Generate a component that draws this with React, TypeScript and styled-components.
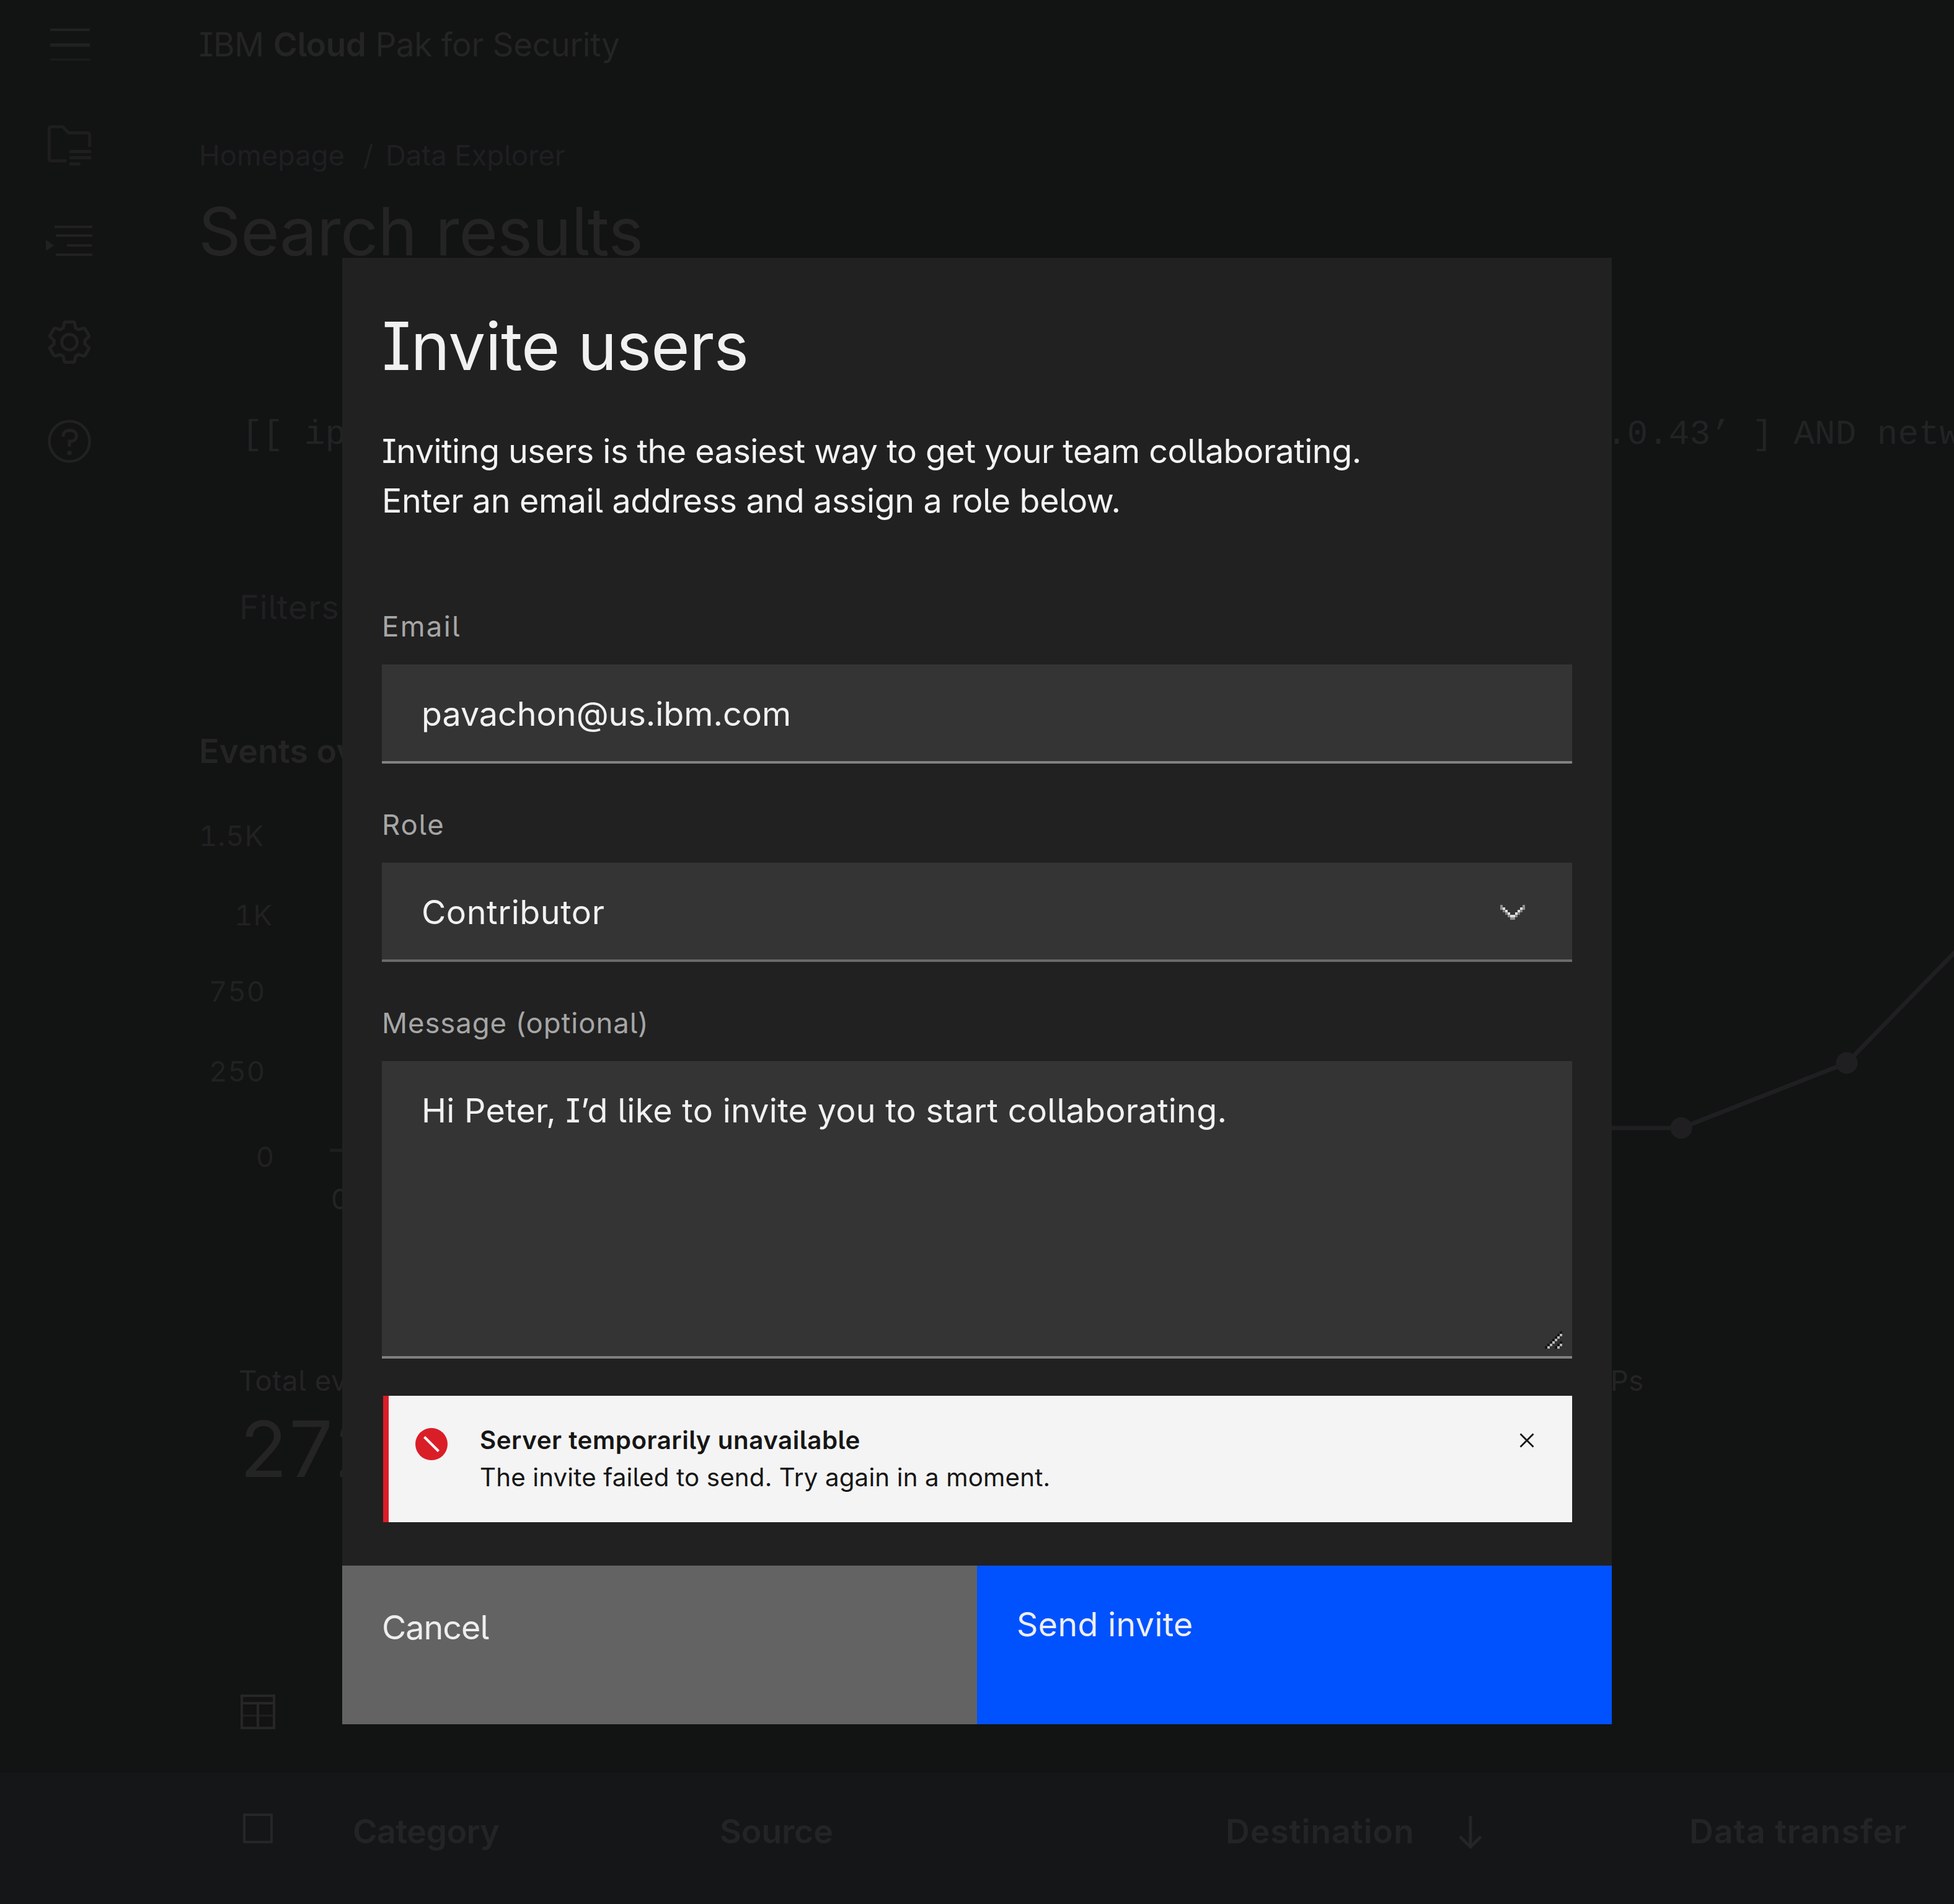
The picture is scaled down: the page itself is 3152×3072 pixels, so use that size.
import React from "react";
import styled, { createGlobalStyle } from "styled-components";

const sans = `Inter, "Noto Sans", "Liberation Sans", sans-serif`;
const mono = `"Liberation Mono", monospace`;

const GlobalStyle = createGlobalStyle`
  html, body { margin: 0; padding: 0; background: #121313; }
  *, *::before, *::after { box-sizing: border-box; }
  body { font-family: ${sans}; font-feature-settings: "cv05", "cv08"; font-kerning: normal; }
  h1, h2, p { margin: 0; font-weight: 400; }
  button { border: 0; font: inherit; font-feature-settings: inherit; text-align: left; }
`;

/* ---------- page behind the dialog ---------- */

const Page = styled.div`
  position: relative;
  display: flex;
  flex-direction: column;
  width: 3152px;
  height: 3072px;
  overflow: hidden;
  background: #121313;
  color: #242425;
  white-space: nowrap;
`;

const Upper = styled.div`
  display: flex;
  height: 2860px;
`;

const Rail = styled.nav`
  flex: none;
  display: flex;
  flex-direction: column;
  align-items: center;
  gap: 80px;
  width: 224px;
  padding-top: 32px;
  color: #212122;
`;

const RailIcon = styled.svg<{ $dim?: boolean }>`
  display: block;
  width: 80px;
  height: 80px;
  fill: currentColor;
  opacity: ${(p) => (p.$dim ? 0.8 : 1)};
`;

const Main = styled.main`
  flex: 1;
  min-width: 0;
  display: flex;
  flex-direction: column;
`;

const Brand = styled.div`
  display: flex;
  gap: 15px;
  padding-left: 97px;
  font-size: 53px;
  line-height: 145px;
  height: 144px;
  letter-spacing: -0.4px;
`;

const BrandStrong = styled.strong`
  font-weight: 600;
`;

const Breadcrumb = styled.div`
  display: flex;
  margin-top: 75px;
  padding-left: 97px;
  font-size: 45.5px;
  line-height: 64px;
  letter-spacing: -0.1px;
  color: #1f1f22;
`;

const Slash = styled.span`
  width: 66px;
  text-align: center;
  padding-left: 10px;
`;

const PageTitle = styled.h1`
  margin-top: 26px;
  padding-left: 96px;
  font-size: 107px;
  line-height: 128px;
  letter-spacing: -0.4px;
`;

const Query = styled.div`
  display: flex;
  align-items: center;
  justify-content: space-between;
  height: 294px;
  margin-top: 117px;
  padding-left: 166px;
  background: #121414;
  color: #222324;
  font-family: ${mono};
  font-size: 56px;
`;

const QueryTail = styled.span`
  width: 561px;
`;

const Filters = styled.div`
  margin-top: 92px;
  padding-left: 162px;
  font-size: 53.8px;
  line-height: 80px;
  letter-spacing: 0.9px;
  color: #202023;
`;

const ChartTitle = styled.h2`
  margin-top: 152px;
  padding-left: 97px;
  font-size: 53.8px;
  font-weight: 600;
  line-height: 80px;
`;

const Chart = styled.div`
  display: flex;
  height: 944px;
`;

const Axis = styled.div`
  flex: none;
  display: flex;
  flex-direction: column;
  align-items: flex-end;
  width: 308px;
  padding-top: 65px;
  font-size: 45.5px;
  line-height: 64px;
  letter-spacing: 0.8px;
  font-variant-numeric: tabular-nums;
  color: #212122;
`;

const AxisLabel = styled.span<{ $inset: number; $gap: number }>`
  margin-top: ${(p) => p.$gap}px;
  margin-right: ${(p) => p.$inset}px;
`;

const Plot = styled.div`
  flex: 1;
  display: flex;
  flex-direction: column;
`;

const PlotLines = styled.svg`
  display: block;
  width: 2620px;
  height: 648px;
`;

const XLabel = styled.span`
  margin-top: 3px;
  padding-left: 2px;
  font-size: 45.5px;
  line-height: 64px;
`;

const Stats = styled.div`
  display: grid;
  grid-template-columns: 2192px 1fr;
  padding-left: 161px;
`;

const Stat = styled.div`
  display: flex;
  flex-direction: column;
  gap: 14px;
`;

const StatLabel = styled.span`
  font-size: 45.5px;
  line-height: 64px;
  letter-spacing: 0.6px;
`;

const StatValue = styled.span`
  font-size: 125px;
  line-height: 128px;
  letter-spacing: -5px;
  font-variant-numeric: tabular-nums;
`;

const TableIcon = styled.svg`
  display: block;
  width: 56px;
  height: 56px;
  margin: 332px 0 0 164px;
`;

const TableHead = styled.div`
  flex: 1;
  display: grid;
  grid-template-columns: 177px 592px 816px 375px 373px 1fr;
  align-items: start;
  padding: 55px 0 0 392px;
  background: #151617;
  font-size: 53.8px;
  font-weight: 600;
  line-height: 80px;
  color: #232425;
`;

const Checkbox = styled.span`
  width: 48px;
  height: 48px;
  margin-top: 11px;
  border: 4px solid #252627;
`;

const Heading = styled.span<{ $track: number }>`
  letter-spacing: ${(p) => p.$track}px;
`;

const SortIcon = styled.svg`
  width: 40px;
  height: 54px;
  margin-top: 15px;
`;

/* ---------- dialog ---------- */

const Dialog = styled.section`
  position: absolute;
  top: 416px;
  left: 552px;
  display: flex;
  flex-direction: column;
  width: 2048px;
  height: 2366px;
  background: #212121;
  color: #f1f1f1;
`;

const DialogBody = styled.div`
  flex: 1;
  display: flex;
  flex-direction: column;
  padding: 78px 64px 0;
`;

const DialogTitle = styled.h2`
  font-size: 107px;
  line-height: 128px;
  letter-spacing: -0.75px;
`;

const Lead = styled.p`
  margin-top: 66.4px;
  margin-bottom: 63.6px;
  font-size: 53.8px;
  line-height: 80px;
  color: #f3f3f3;
`;

const LeadLine = styled.span<{ $track: number }>`
  display: block;
  letter-spacing: ${(p) => p.$track}px;
`;

const Field = styled.div`
  display: flex;
  flex-direction: column;
  gap: 36.6px;
  padding-top: 75.4px;
`;

const Label = styled.label<{ $track: number }>`
  font-size: 45.5px;
  line-height: 48px;
  letter-spacing: ${(p) => p.$track}px;
  color: #a6a6a6;
`;

const Control = styled.div<{ $tall?: boolean; $line: string; $track: number }>`
  display: flex;
  justify-content: space-between;
  height: ${(p) => (p.$tall ? 480 : 160)}px;
  padding: 40px ${(p) => (p.$tall ? 16 : 76)}px 0 64px;
  border-bottom: 4px solid ${(p) => p.$line};
  background: #343434;
  font-size: 53.8px;
  line-height: 80px;
  letter-spacing: ${(p) => p.$track}px;
`;

const Chevron = styled.svg`
  width: 40px;
  height: 24px;
  margin-top: 28px;
  shape-rendering: crispEdges;
`;

const Grip = styled.svg`
  align-self: flex-end;
  width: 28px;
  height: 28px;
  margin-bottom: 12px;
  shape-rendering: crispEdges;
`;

const Notice = styled.div`
  display: flex;
  height: 204px;
  margin: 60px 0 0 2px;
  padding: 42px 61px 0 43px;
  border-left: 9px solid #da1e28;
  background: #f4f4f4;
  color: #161616;
  font-size: 40.3px;
  line-height: 60px;
`;

const ErrorIcon = styled.svg`
  flex: none;
  width: 52px;
  height: 52px;
  margin-top: 10px;
`;

const NoticeText = styled.div`
  flex: 1;
  display: flex;
  flex-direction: column;
  padding-left: 52px;
  letter-spacing: 0.15px;
`;

const NoticeTitle = styled.strong`
  font-weight: 600;
  letter-spacing: 0.53px;
`;

const CloseIcon = styled.svg`
  width: 24px;
  height: 24px;
  margin-top: 18px;
`;

const Footer = styled.footer`
  display: grid;
  grid-template-columns: 1fr 1fr;
  height: 256px;
`;

const Action = styled.button<{ $primary?: boolean }>`
  display: flex;
  align-items: flex-start;
  padding: ${(p) => (p.$primary ? 55 : 60)}px 64px 0;
  background: ${(p) => (p.$primary ? "#0052ff" : "#636363")};
  color: #eeeeee;
  font-size: 53.8px;
  line-height: 80px;
  letter-spacing: ${(p) => (p.$primary ? 0.3 : -1)}px;
`;

const yAxis = [
  { text: "1.5K", inset: 106, gap: 0 },
  { text: "1K", inset: 92, gap: 64 },
  { text: "750", inset: 104, gap: 59 },
  { text: "250", inset: 104, gap: 65 },
  { text: "0", inset: 89, gap: 74 },
];

const chevronDots = [
  [0, 0, "#8f8f8f"], [0, 4, "#8f8f8f"], [4, 4, "#dedede"], [4, 8, "#7e7e7e"],
  [8, 8, "#dedede"], [8, 12, "#7e7e7e"], [12, 12, "#dedede"], [12, 16, "#8a8a8a"],
  [16, 16, "#dedede"], [16, 20, "#8f8f8f"], [20, 16, "#dedede"], [20, 20, "#8f8f8f"],
  [24, 12, "#dedede"], [24, 16, "#8a8a8a"], [28, 8, "#dedede"], [28, 12, "#7e7e7e"],
  [32, 4, "#dedede"], [32, 8, "#7e7e7e"], [36, 0, "#8f8f8f"], [36, 4, "#8f8f8f"],
] as const;

const gripDots = [
  ...[0, 1, 2, 3, 4, 5, 6].map((i) => [i * 4, 24 - i * 4, "#161616"] as const),
  ...[1, 2, 3, 4, 5, 6].map((i) => [i * 4, 28 - i * 4, "#b5b5b5"] as const),
  ...[4, 5, 6].map((i) => [i * 4, 40 - i * 4, "#161616"] as const),
  ...[5, 6].map((i) => [i * 4, 44 - i * 4, "#b5b5b5"] as const),
];

function RailIcons() {
  return (
    <Rail>
      <RailIcon viewBox="0 0 80 80">
        <rect x="9" y="14" width="64" height="4" />
        <rect x="9" y="38" width="64" height="5.5" />
        <rect x="9" y="62" width="64" height="4" opacity="0.5" />
      </RailIcon>
      <RailIcon $dim viewBox="0 0 32 32">
        <rect x="16" y="20" width="14" height="2" />
        <rect x="16" y="24" width="14" height="2" />
        <rect x="16" y="28" width="7" height="2" />
        <path d="M14,26H4V6h7.17l3.41,3.41.59.59H28v8h2V10a2,2,0,0,0-2-2H16L12.59,4.59A2,2,0,0,0,11.17,4H4A2,2,0,0,0,2,6V26a2,2,0,0,0,2,2H14Z" />
      </RailIcon>
      <RailIcon viewBox="0 0 80 80">
        <rect x="16" y="12" width="61" height="4" />
        <rect x="18" y="26" width="59" height="4" />
        <rect x="36" y="42" width="40" height="4" />
        <rect x="18" y="57" width="59" height="4" />
        <path d="M2 35L15 44L2 53Z" />
      </RailIcon>
      <RailIcon viewBox="0 0 32 32">
        <path d="M27,16.76c0-.25,0-.5,0-.76s0-.51,0-.77l1.92-1.68A2,2,0,0,0,29.3,11L26.94,7a2,2,0,0,0-1.73-1,2,2,0,0,0-.64.1l-2.43.82a11.35,11.35,0,0,0-1.31-.75l-.51-2.52a2,2,0,0,0-2-1.61H13.64a2,2,0,0,0-2,1.61l-.51,2.52a11.48,11.48,0,0,0-1.32.75L7.43,6.06A2,2,0,0,0,6.79,6,2,2,0,0,0,5.06,7L2.7,11a2,2,0,0,0,.41,2.51L5,15.24c0,.25,0,.5,0,.76s0,.51,0,.77L3.11,18.45A2,2,0,0,0,2.7,21L5.06,25a2,2,0,0,0,1.73,1,2,2,0,0,0,.64-.1l2.43-.82a11.35,11.35,0,0,0,1.31.75l.51,2.52a2,2,0,0,0,2,1.61h4.72a2,2,0,0,0,2-1.61l.51-2.52a11.48,11.48,0,0,0,1.32-.75l2.42.82a2,2,0,0,0,.64.1,2,2,0,0,0,1.73-1L29.3,21a2,2,0,0,0-.41-2.51ZM25.21,24l-3.43-1.16a8.86,8.86,0,0,1-2.71,1.57L18.36,28H13.64l-.71-3.55a9.36,9.36,0,0,1-2.7-1.57L6.79,24,4.43,20l2.72-2.4a8.9,8.9,0,0,1,0-3.13L4.43,12,6.79,8l3.43,1.16a8.86,8.86,0,0,1,2.71-1.57L13.64,4h4.72l.71,3.55a9.36,9.36,0,0,1,2.7,1.57L25.21,8,27.57,12l-2.72,2.4a8.9,8.9,0,0,1,0,3.13L27.57,20Z" />
        <path d="M16,22a6,6,0,1,1,6-6A5.94,5.94,0,0,1,16,22Zm0-10a3.91,3.91,0,0,0-4,4,3.91,3.91,0,0,0,4,4,3.91,3.91,0,0,0,4-4A3.91,3.91,0,0,0,16,12Z" />
      </RailIcon>
      <RailIcon viewBox="0 0 32 32">
        <circle cx="16" cy="16" r="13" fill="none" stroke="currentColor" strokeWidth="1.8" />
        <circle cx="16" cy="23.5" r="1.5" />
        <path d="M17,8H15.5A4.49,4.49,0,0,0,11,12.5V13h2v-.5A2.5,2.5,0,0,1,15.5,10H17a2.5,2.5,0,0,1,0,5H15v4.5h2V17a4.5,4.5,0,0,0,0-9Z" />
      </RailIcon>
    </Rail>
  );
}

function InviteDialog() {
  return (
    <Dialog>
      <DialogBody>
        <DialogTitle>Invite users</DialogTitle>
        <Lead>
          <LeadLine $track={-0.5}>Inviting users is the easiest way to get your team collaborating.</LeadLine>
          <LeadLine $track={-0.35}>Enter an email address and assign a role below.</LeadLine>
        </Lead>
        <Field>
          <Label $track={2.3}>Email</Label>
          <Control $line="#828282" $track={0}>pavachon@us.ibm.com</Control>
        </Field>
        <Field>
          <Label $track={1.8}>Role</Label>
          <Control $line="#6b6b6b" $track={0.55}>
            Contributor
            <Chevron viewBox="0 0 40 24">
              {chevronDots.map(([x, y, c]) => (
                <rect key={`${x}-${y}`} x={x} y={y} width="4" height="4" fill={c} />
              ))}
            </Chevron>
          </Control>
        </Field>
        <Field>
          <Label $track={0.9}>Message (optional)</Label>
          <Control $tall $line="#808080" $track={0.3}>
            Hi Peter, I’d like to invite you to start collaborating.
            <Grip viewBox="0 0 28 28">
              {gripDots.map(([x, y, c]) => (
                <rect key={`${x}-${y}`} x={x} y={y} width="4" height="4" fill={c} />
              ))}
            </Grip>
          </Control>
        </Field>
        <Notice>
          <ErrorIcon viewBox="0 0 52 52">
            <circle cx="26" cy="26" r="26" fill="#da1e28" />
            <path d="M14.5 14.5L37.5 37.5" stroke="#fff" strokeWidth="4" />
          </ErrorIcon>
          <NoticeText>
            <NoticeTitle>Server temporarily unavailable</NoticeTitle>
            <span>The invite failed to send. Try again in a moment.</span>
          </NoticeText>
          <CloseIcon viewBox="0 0 24 24">
            <path d="M1.5 1.5L22.5 22.5M22.5 1.5L1.5 22.5" stroke="#161616" strokeWidth="2.8" />
          </CloseIcon>
        </Notice>
      </DialogBody>
      <Footer>
        <Action>Cancel</Action>
        <Action $primary>Send invite</Action>
      </Footer>
    </Dialog>
  );
}

export default function App() {
  return (
    <>
      <GlobalStyle />
      <Page>
        <Upper>
          <RailIcons />
          <Main>
            <Brand>
              <span>IBM</span>
              <BrandStrong>Cloud</BrandStrong>
              <span>Pak for Security</span>
            </Brand>
            <Breadcrumb>
              <span>Homepage</span>
              <Slash>/</Slash>
              <span>Data Explorer</span>
            </Breadcrumb>
            <PageTitle>Search results</PageTitle>
            <Query>
              <span>[[ ip</span>
              <QueryTail>.0.43’ ] AND netw</QueryTail>
            </Query>
            <Filters>Filters</Filters>
            <ChartTitle>Events ov</ChartTitle>
            <Chart>
              <Axis>
                {yAxis.map((a) => (
                  <AxisLabel key={a.text} $inset={a.inset} $gap={a.gap}>{a.text}</AxisLabel>
                ))}
              </Axis>
              <Plot>
                <PlotLines viewBox="0 0 2620 648">
                  <path d="M0 604H30" stroke="#1e1e21" strokeWidth="5" />
                  <g fill="#1f1f22" stroke="#1f1f22" strokeWidth="7">
                    <path d="M2060 568H2180L2447 463L2640 265" fill="none" />
                    <circle cx="2180" cy="568" r="14" />
                    <circle cx="2447" cy="463" r="14" />
                  </g>
                </PlotLines>
                <XLabel>0</XLabel>
              </Plot>
            </Chart>
            <Stats>
              <Stat>
                <StatLabel>Total ev</StatLabel>
                <StatValue>272</StatValue>
              </Stat>
              <StatLabel>IPs</StatLabel>
            </Stats>
            <TableIcon viewBox="0 0 56 56" fill="none" stroke="#262627" strokeWidth="4">
              <path d="M2 2H54V54H2ZM2 14H54M28 14V54" />
              <path d="M2 34H54" strokeWidth="3" opacity="0.7" />
            </TableIcon>
          </Main>
        </Upper>
        <TableHead>
          <Checkbox />
          <Heading $track={-0.6}>Category</Heading>
          <Heading $track={-0.2}>Source</Heading>
          <Heading $track={0.8}>Destination</Heading>
          <SortIcon viewBox="0 0 40 54" fill="none" stroke="#242526" strokeWidth="5">
            <path d="M20 0V50M3 33L20 50L37 33" />
          </SortIcon>
          <Heading $track={0.9}>Data transfer</Heading>
        </TableHead>
        <InviteDialog />
      </Page>
    </>
  );
}
